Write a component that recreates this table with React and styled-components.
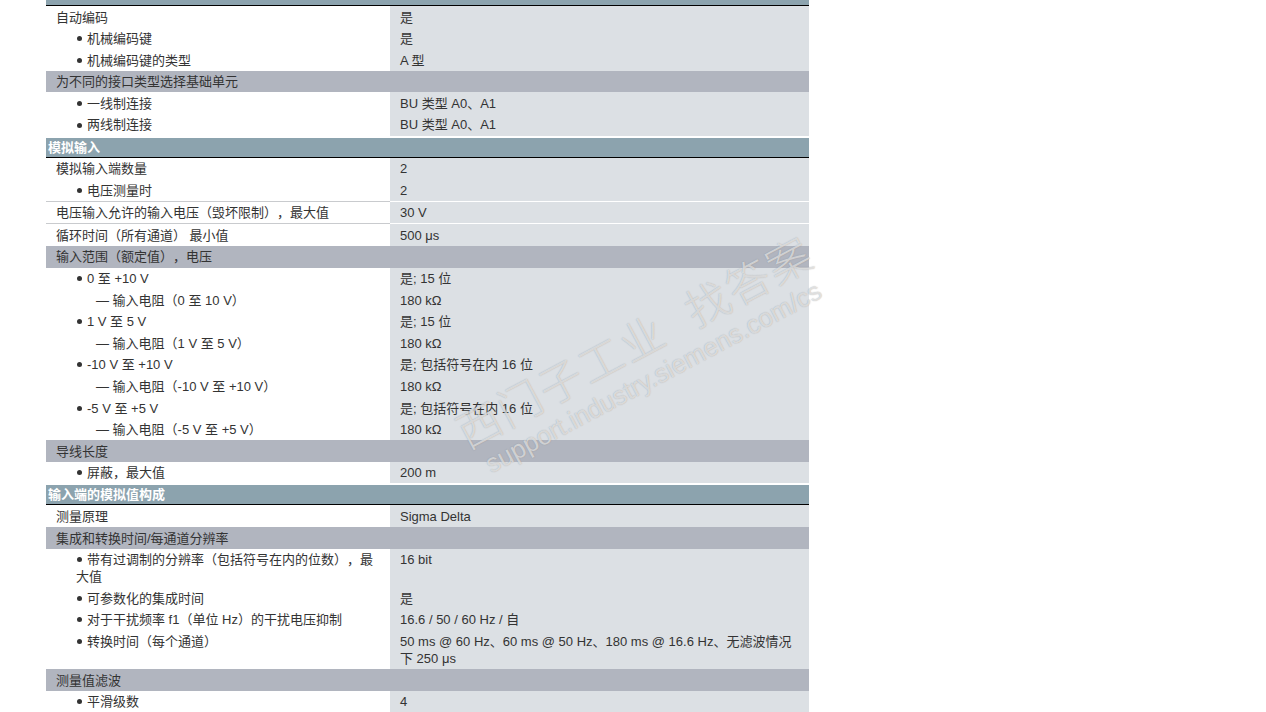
import React from 'react';
import styled, { createGlobalStyle } from 'styled-components';

const GlobalStyle = createGlobalStyle`
  body {
    margin: 0;
    background: #fff;
    font-family: "Liberation Sans", Arial, "Noto Sans CJK SC", sans-serif;
    font-size: 13px;
    color: #333;
    text-spacing-trim: space-all;
  }
`;

const Page = styled.div`
  position: relative;
  width: 1266px;
  height: 712px;
  overflow: hidden;
  padding-left: 46px;
  box-sizing: border-box;
`;

const Table = styled.div`
  width: 763px;
  display: grid;
  grid-template-columns: 344px 419px;
`;

const TopBar = styled.div`
  grid-column: 1 / 3;
  height: 5px;
  background: #8ca3ae;
  border-bottom: 1px solid #000;
`;

const Section = styled.div`
  grid-column: 1 / 3;
  margin-top: 2px;
  height: 19px;
  line-height: 19px;
  padding-left: 2px;
  background: #8ca3ae;
  border-bottom: 1px solid #000;
  color: #fff;
  font-weight: bold;
`;

const Group = styled.div`
  grid-column: 1 / 3;
  padding: 2.5px 0 2.1px 10px;
  line-height: 17px;
  background: #b1b5bf;
  color: #333;
`;

const Label = styled.div`
  padding: 2.5px 8px 2.1px ${p => [10, 30, 50][p.$level]}px;
  line-height: 17px;
  background: #fff;
  border-bottom: ${p => (p.$line ? '1px solid #c9cbce' : 'none')};
`;

const Value = styled.div`
  padding: 2.5px 14px 2.1px 10px;
  line-height: 17px;
  background: #dce0e4;
  border-bottom: ${p => (p.$line ? '1px solid #fff' : 'none')};
`;

const Dot = styled.span`
  display: inline-block;
  width: 5px;
  height: 5px;
  border-radius: 50%;
  background: #333;
  margin: 0 5px 2px 1px;
  vertical-align: middle;
`;

const Watermark = styled.div`
  position: absolute;
  left: 432px;
  top: 318px;
  width: 420px;
  transform: rotate(-28deg);
  transform-origin: center;
  text-align: center;
  pointer-events: none;
  color: rgba(255, 255, 255, 0.6);
  text-shadow: 0 0 1px rgba(100, 100, 100, 0.55);
`;

const MarkTitle = styled.div`
  font-size: 44px;
  line-height: 48px;
  letter-spacing: 2px;
  font-weight: 300;
`;

const MarkUrl = styled.div`
  font-size: 26px;
  line-height: 28px;
`;

const rows = [
  { k: 'row', l: '自动编码', v: '是', lv: 0 },
  { k: 'row', l: '机械编码键', v: '是', lv: 1 },
  { k: 'row', l: '机械编码键的类型', v: 'A 型', lv: 1 },
  { k: 'group', l: '为不同的接口类型选择基础单元' },
  { k: 'row', l: '一线制连接', v: 'BU 类型 A0、A1', lv: 1 },
  { k: 'row', l: '两线制连接', v: 'BU 类型 A0、A1', lv: 1 },
  { k: 'section', l: '模拟输入' },
  { k: 'row', l: '模拟输入端数量', v: '2', lv: 0 },
  { k: 'row', l: '电压测量时', v: '2', lv: 1, line: true },
  { k: 'row', l: '电压输入允许的输入电压（毁坏限制），最大值', v: '30 V', lv: 0, line: true },
  { k: 'row', l: '循环时间（所有通道） 最小值', v: '500 μs', lv: 0 },
  { k: 'group', l: '输入范围（额定值），电压' },
  { k: 'row', l: '0 至 +10 V', v: '是; 15 位', lv: 1 },
  { k: 'row', l: '— 输入电阻（0 至 10 V）', v: '180 kΩ', lv: 2 },
  { k: 'row', l: '1 V 至 5 V', v: '是; 15 位', lv: 1 },
  { k: 'row', l: '— 输入电阻（1 V 至 5 V）', v: '180 kΩ', lv: 2 },
  { k: 'row', l: '-10 V 至 +10 V', v: '是; 包括符号在内 16 位', lv: 1 },
  { k: 'row', l: '— 输入电阻（-10 V 至 +10 V）', v: '180 kΩ', lv: 2 },
  { k: 'row', l: '-5 V 至 +5 V', v: '是; 包括符号在内 16 位', lv: 1 },
  { k: 'row', l: '— 输入电阻（-5 V 至 +5 V）', v: '180 kΩ', lv: 2 },
  { k: 'group', l: '导线长度' },
  { k: 'row', l: '屏蔽，最大值', v: '200 m', lv: 1 },
  { k: 'section', l: '输入端的模拟值构成' },
  { k: 'row', l: '测量原理', v: 'Sigma Delta', lv: 0 },
  { k: 'group', l: '集成和转换时间/每通道分辨率' },
  { k: 'row', l: '带有过调制的分辨率（包括符号在内的位数），最大值', v: '16 bit', lv: 1 },
  { k: 'row', l: '可参数化的集成时间', v: '是', lv: 1 },
  { k: 'row', l: '对于干扰频率 f1（单位 Hz）的干扰电压抑制', v: '16.6 / 50 / 60 Hz / 自', lv: 1 },
  { k: 'row', l: '转换时间（每个通道）', v: '50 ms @ 60 Hz、60 ms @ 50 Hz、180 ms @ 16.6 Hz、无滤波情况下 250 μs', lv: 1 },
  { k: 'group', l: '测量值滤波' },
  { k: 'row', l: '平滑级数', v: '4', lv: 1 },
];

export default function App() {
  return (
    <Page>
      <GlobalStyle />
      <Table>
        <TopBar />
        {rows.map((r, i) => {
          if (r.k === 'section') return <Section key={i}>{r.l}</Section>;
          if (r.k === 'group') return <Group key={i}>{r.l}</Group>;
          return (
            <React.Fragment key={i}>
              <Label $level={r.lv} $line={r.line}>
                {r.lv === 1 && <Dot />}
                {r.l}
              </Label>
              <Value $line={r.line}>{r.v}</Value>
            </React.Fragment>
          );
        })}
      </Table>
      <Watermark>
        <MarkTitle>西门子工业&nbsp;&nbsp;找答案</MarkTitle>
        <MarkUrl>support.industry.siemens.com/cs</MarkUrl>
      </Watermark>
    </Page>
  );
}
